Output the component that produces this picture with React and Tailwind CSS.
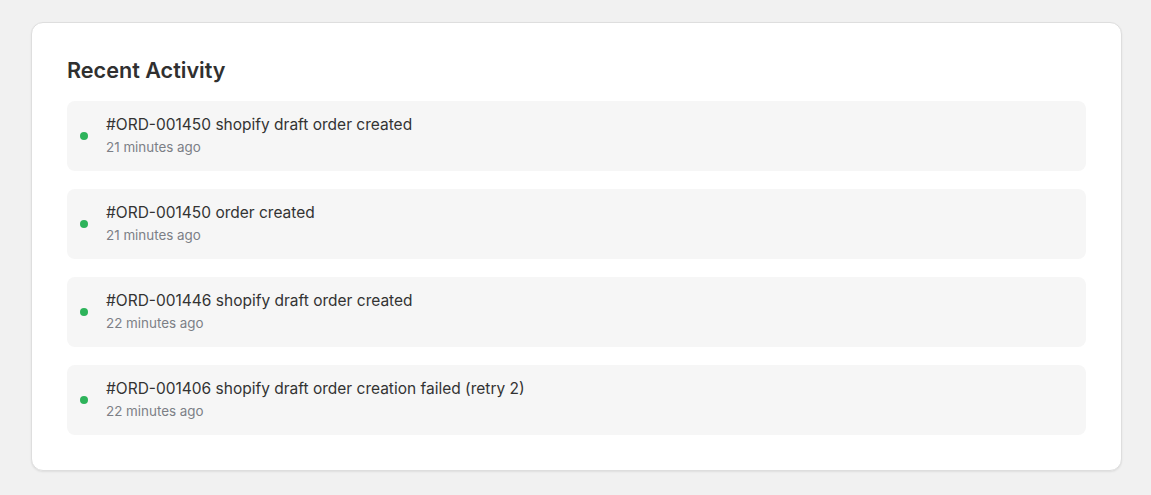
export default function App() {
  const items = [
    { t: "#ORD-001450 shopify draft order created", s: "21 minutes ago" },
    { t: "#ORD-001450 order created", s: "21 minutes ago" },
    { t: "#ORD-001446 shopify draft order created", s: "22 minutes ago" },
    { t: "#ORD-001406 shopify draft order creation failed (retry 2)", s: "22 minutes ago" },
  ];
  return (
    <div className="min-h-[495px] bg-[#f1f1f1] pt-[22px] pl-[31px]" style={{ fontFamily: "Inter, 'Noto Sans', sans-serif" }}>
      <div className="w-[1091px] rounded-[12px] border border-[#dedede] bg-white shadow-[0_1px_2px_rgba(0,0,0,0.08)] px-[35px] pt-[32px] pb-[35px]">
        <h2 className="text-[21.6px] leading-[30px] font-semibold text-[#303030] mb-[16px]">Recent Activity</h2>
        <div className="flex flex-col gap-[18px]">
          {items.map((it, i) => (
            <div key={i} className="h-[70px] rounded-[8px] bg-[#f6f6f6] flex items-center pl-[13px] gap-[18px]">
              <span className="w-[8px] h-[8px] rounded-full bg-[#2db35a] shrink-0" />
              <div className="flex flex-col">
                <span className="text-[15.5px] leading-[22px] text-[#333333]">{it.t}</span>
                <span className="text-[13.4px] leading-[22px] text-[#7c7f86]">{it.s}</span>
              </div>
            </div>
          ))}
        </div>
      </div>
    </div>
  );
}
